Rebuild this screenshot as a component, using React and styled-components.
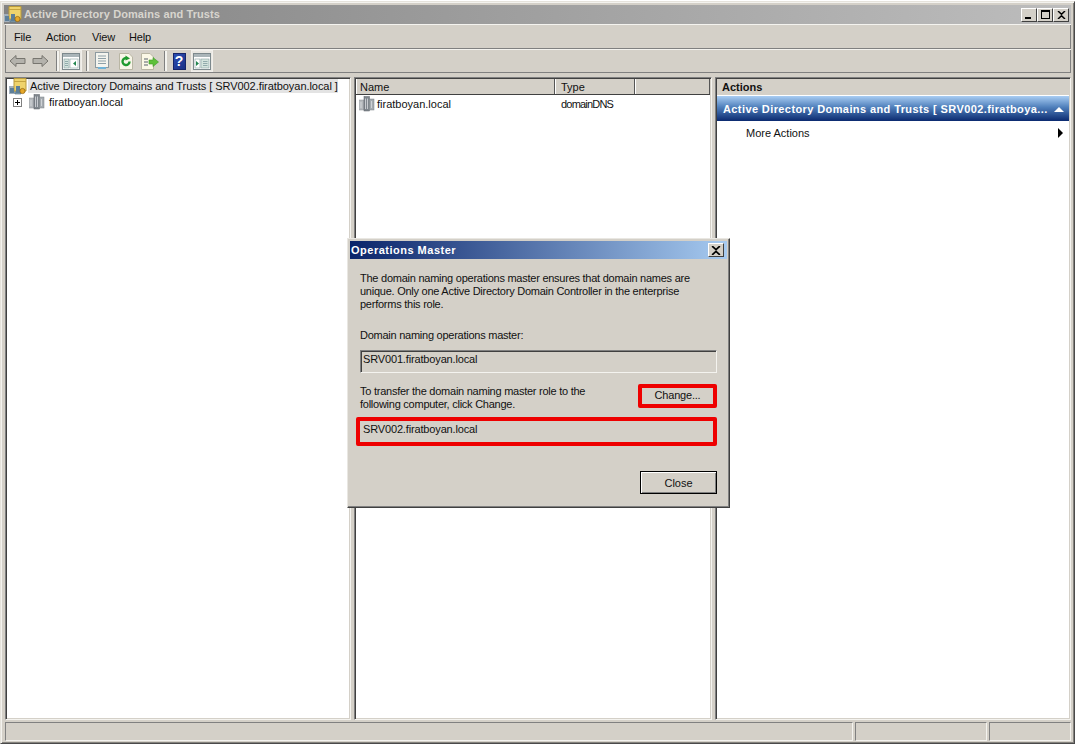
import React from "react";
import styled, { createGlobalStyle } from "styled-components";

const GlobalStyle = createGlobalStyle`
  html, body { margin: 0; padding: 0; background: #fff; }
  body {
    width: 1078px;
    height: 748px;
    overflow: hidden;
    font-family: "Liberation Sans", Arial, sans-serif;
    font-size: 11px;
    color: #111;
  }
`;

function BackIcon({ flip }) {
  return (
    <svg width="17" height="14" viewBox="0 0 17 14" style={{ transform: flip ? "scaleX(-1)" : "none" }}>
      <path d="M1 7 L7 1.5 V4.5 H16 V9.5 H7 V12.5 Z" fill="#b4b2ac" stroke="#77756f" />
    </svg>
  );
}

function PaneIcon({ right }) {
  return (
    <svg width="18" height="17" viewBox="0 0 18 17">
      <rect x="0.5" y="0.5" width="17" height="16" fill="#fff" stroke="#7d898d" />
      <rect x="1" y="1" width="16" height="3" fill="#aab5b9" />
      <rect x="2" y="6" width="5" height="9" fill={right ? "#fff" : "#d5e4de"} stroke="#87a0a0" strokeWidth="0.6" />
      <rect x="8" y="6" width="8" height="9" fill={right ? "#d5e4de" : "#fff"} stroke="#87a0a0" strokeWidth="0.6" />
      <path d={right ? "M3 8 L6 10.5 L3 13 Z" : "M14 8 L11 10.5 L14 13 Z"} fill="#23864f" />
      <path d={right ? "M10 8.5 H14.5 M10 10.5 H14.5 M10 12.5 H14.5" : "M3 8.5 H6 M3 10.5 H6 M3 12.5 H6"} stroke="#7f9aa0" strokeWidth="0.8" />
    </svg>
  );
}

function ListIcon() {
  return (
    <svg width="17" height="18" viewBox="0 0 17 18">
      <rect x="1.5" y="0.5" width="13" height="15" fill="#f4f4ee" stroke="#8d9aa0" />
      <path d="M4 4 H12 M4 6.5 H12 M4 9 H12 M4 11.5 H12" stroke="#8ea0a8" />
      <rect x="4" y="15" width="8" height="2" fill="#6fb3d8" />
    </svg>
  );
}

function RefreshIcon() {
  return (
    <svg width="16" height="17" viewBox="0 0 16 17">
      <path d="M1.5 0.5 H11 L14.5 4 V16.5 H1.5 Z" fill="#f8f6e8" stroke="#b9b6a4" />
      <path d="M11.5 8.5 A3.5 3.5 0 1 1 9.5 5.4" fill="none" stroke="#1f9a2e" strokeWidth="2.4" />
      <path d="M7.5 2.5 L12 5.5 L7.5 7.5 Z" fill="#1f9a2e" />
    </svg>
  );
}

function ExportIcon() {
  return (
    <svg width="19" height="17" viewBox="0 0 19 17">
      <path d="M1.5 0.5 H10 L13.5 4 V16.5 H1.5 Z" fill="#fbf8e6" stroke="#b9b6a4" />
      <path d="M4 6 H8 M4 9 H8 M4 12 H8" stroke="#56606a" />
      <path d="M9 7 H13 V4.5 L18.5 9 L13 13.5 V11 H9 Z" fill="#5ec13a" stroke="#3c9a2a" strokeWidth="0.6" />
    </svg>
  );
}

function ConsoleIcon() {
  return (
    <svg width="18" height="17" viewBox="0 0 18 17">
      <path d="M0 8 H7 V16 H0 Z" fill="#a3b0bd" />
      <path d="M6 6 H12 V16 H6 Z" fill="#88a2b3" stroke="#4a6c7d" strokeWidth="0.6" />
      <path d="M5 0.5 H17 V13 H5 Z" fill="#efd36c" stroke="#b99a3a" />
      <path d="M5 3.5 H17" stroke="#c5a440" />
      <rect x="1" y="10" width="4" height="5" fill="#5d7f99" />
      <rect x="7" y="8" width="4" height="7" fill="#5d7f99" />
      <circle cx="13.5" cy="13" r="2.6" fill="#e6a829" stroke="#8b5e10" strokeWidth="0.7" />
    </svg>
  );
}

function DomainIcon() {
  return (
    <svg width="16" height="16" viewBox="0 0 16 16">
      <rect x="0.5" y="4" width="4.5" height="10" fill="#b5b9bd" stroke="#8a8f94" strokeWidth="0.5" />
      <rect x="5" y="0.5" width="5.5" height="14.5" fill="#7f868d" stroke="#5c6167" strokeWidth="0.5" />
      <rect x="10.5" y="3" width="4.5" height="11" fill="#a5abb0" stroke="#7d8388" strokeWidth="0.5" />
      <path d="M6.5 2.5 V13 M8.5 2.5 V13 M2 6 V12 M12.5 5 V12" stroke="#d9dcdf" strokeWidth="0.8" />
    </svg>
  );
}

function CloseGlyph({ size = 9 }) {
  return (
    <svg width={size} height={size - 1} viewBox="0 0 9 8">
      <path d="M1 0 L4.5 3.2 L8 0 M1 8 L4.5 4.8 L8 8" fill="none" stroke="#000" strokeWidth="1.5" />
    </svg>
  );
}

export default function App() {
  return (
    <>
      <GlobalStyle />
      <Window>
        <TitleBar>
          <TitleIcon><ConsoleIcon /></TitleIcon>
          <TitleText>Active Directory Domains and Trusts</TitleText>
          <WinButtons>
            <WinButton><MinGlyph /></WinButton>
            <WinButton><MaxGlyph /></WinButton>
            <WinButton><CloseGlyph /></WinButton>
          </WinButtons>
        </TitleBar>

        <MenuBar>
          <MenuItem $w={32}>File</MenuItem>
          <MenuItem $w={46}>Action</MenuItem>
          <MenuItem $w={37}>View</MenuItem>
          <MenuItem>Help</MenuItem>
        </MenuBar>

        <ToolBar>
          <ToolSlot $w={23}><BackIcon /></ToolSlot>
          <ToolSlot $w={23}><BackIcon flip /></ToolSlot>
          <ToolSep />
          <ToolToggle><PaneIcon /></ToolToggle>
          <ToolSep />
          <ToolSlot $w={24}><ListIcon /></ToolSlot>
          <ToolSlot $w={24}><RefreshIcon /></ToolSlot>
          <ToolSlot $w={22}><ExportIcon /></ToolSlot>
          <ToolSep />
          <ToolSlot $w={22}><HelpBox>?</HelpBox></ToolSlot>
          <ToolToggle $ml={1}><PaneIcon right /></ToolToggle>
        </ToolBar>

        <Panes>
          <Pane>
            <RootRow>
              <ConsoleIcon />
              <RootLabel>Active Directory Domains and Trusts [ SRV002.firatboyan.local ]</RootLabel>
            </RootRow>
            <TreeRow>
              <Expander />
              <DomainIcon />
              <span>firatboyan.local</span>
            </TreeRow>
          </Pane>

          <Pane>
            <ColumnHeaders>
              <ColumnHeader $w={199} $pl={3}>Name</ColumnHeader>
              <ColumnHeader $w={80} $pl={5}>Type</ColumnHeader>
              <ColumnHeader $fill />
            </ColumnHeaders>
            <ListRow>
              <NameCell><DomainIcon />firatboyan.local</NameCell>
              <TypeCell>domainDNS</TypeCell>
            </ListRow>
          </Pane>

          <Pane>
            <ActionsHeader>Actions</ActionsHeader>
            <ActionsBand>
              <span>Active Directory Domains and Trusts [ SRV002.firatboya...</span>
              <Caret />
            </ActionsBand>
            <ActionRow>
              <span>More Actions</span>
              <RightArrow />
            </ActionRow>
          </Pane>
        </Panes>

        <StatusBar>
          <StatusCell $w={848} />
          <StatusCell $w={132} />
          <StatusCell $fill />
        </StatusBar>
      </Window>

      <Dialog>
        <DialogTitle>
          <span>Operations Master</span>
          <DialogClose><CloseGlyph size={10} /></DialogClose>
        </DialogTitle>
        <DialogBody>
          <Paragraph>
            The domain naming operations master ensures that domain names are
            <br />
            unique. Only one Active Directory Domain Controller in the enterprise
            <br />
            performs this role.
          </Paragraph>
          <FieldLabel>Domain naming operations master:</FieldLabel>
          <ReadOnlyField>SRV001.firatboyan.local</ReadOnlyField>
          <TransferRow>
            <Paragraph>
              To transfer the domain naming master role to the
              <br />
              following computer, click Change.
            </Paragraph>
            <RedMark $button>
              <PlainButton>Change...</PlainButton>
            </RedMark>
          </TransferRow>
          <RedMark>
            <TargetField>SRV002.firatboyan.local</TargetField>
          </RedMark>
          <DialogFooter>
            <CloseButton>Close</CloseButton>
          </DialogFooter>
        </DialogBody>
      </Dialog>
    </>
  );
}

const Window = styled.div`
  box-sizing: border-box;
  width: 1075px;
  height: 743px;
  margin-top: 1px;
  padding: 3px 3px 2px 4px;
  display: flex;
  flex-direction: column;
  background: #d4d0c8;
  border-top: 1px solid #e6e3dc;
  border-left: 1px solid #e6e3dc;
  border-right: 1px solid #4a4a4a;
  border-bottom: 1px solid #4a4a4a;
  box-shadow: inset 1px 1px 0 #f4f3ef, inset -1px -1px 0 #85837e;
`;

const TitleBar = styled.div`
  height: 19px;
  flex: none;
  display: flex;
  align-items: center;
  margin-left: -1px;
  background: linear-gradient(90deg, #838383, #bdbdbd);
`;

const TitleIcon = styled.div`
  display: flex;
  margin-right: 2px;
`;

const TitleText = styled.div`
  flex: 1;
  margin-top: -1px;
  font-weight: bold;
  font-size: 11px;
  letter-spacing: 0.1px;
  color: #d8d5ce;
`;

const WinButtons = styled.div`
  display: flex;
  margin-right: 2px;
`;

const WinButton = styled.div`
  box-sizing: border-box;
  width: 16px;
  height: 14px;
  display: flex;
  align-items: center;
  justify-content: center;
  background: #d4d0c8;
  border: 1px solid;
  border-color: #fff #404040 #404040 #fff;
`;

const MinGlyph = styled.div`
  width: 6px;
  height: 2px;
  background: #000;
  margin-top: 6px;
  margin-right: 2px;
`;

const MaxGlyph = styled.div`
  box-sizing: border-box;
  width: 9px;
  height: 9px;
  border: 1px solid #000;
  border-top-width: 2px;
`;

const MenuBar = styled.div`
  box-sizing: border-box;
  height: 25px;
  flex: none;
  padding: 1px 0 0 9px;
  display: flex;
  align-items: center;
  letter-spacing: -0.15px;
  border-top: 1px solid #f4f3ef;
  border-bottom: 1px solid #808080;
  box-shadow: inset 1px 0 0 #808080, inset -1px 0 0 #808080;
`;

const MenuItem = styled.div`
  width: ${(p) => (p.$w ? `${p.$w}px` : "auto")};
`;

const ToolBar = styled.div`
  box-sizing: border-box;
  height: 24px;
  flex: none;
  padding-left: 1px;
  display: flex;
  align-items: center;
  border-top: 1px solid #f4f3ef;
  border-bottom: 1px solid #808080;
  box-shadow: inset 1px 0 0 #808080, inset -1px 0 0 #808080;
`;

const ToolSlot = styled.div`
  width: ${(p) => p.$w}px;
  display: flex;
  align-items: center;
  justify-content: center;
`;

const ToolSep = styled.div`
  width: 2px;
  height: 20px;
  margin: 0 1px 0 4px;
  border-left: 1px solid #808080;
  background: #f4f3ef;
`;

const ToolToggle = styled.div`
  box-sizing: border-box;
  width: 22px;
  height: 22px;
  margin-left: ${(p) => p.$ml || 0}px;
  display: flex;
  align-items: center;
  justify-content: center;
  background: #e9e7e2;
  border: 1px solid #f1efeb;
`;

const HelpBox = styled.div`
  box-sizing: border-box;
  width: 13px;
  height: 17px;
  display: flex;
  align-items: center;
  justify-content: center;
  font-size: 14px;
  font-weight: bold;
  color: #fff;
  background: linear-gradient(135deg, #2c4fb4, #1b2f85);
  border: 1px solid #16256a;
`;

const Panes = styled.div`
  flex: 1;
  min-height: 0;
  margin-top: 4px;
  display: grid;
  grid-template-columns: 346px 358px 356px;
  gap: 3px;
`;

const Pane = styled.div`
  box-sizing: border-box;
  min-width: 0;
  background: #fff;
  border: 1px solid;
  border-color: #808080 #f4f3ef #f4f3ef #808080;
  box-shadow: inset 1px 1px 0 #404040, inset -1px -1px 0 #d4d0c8;
  padding: 1px;
  overflow: hidden;
`;

const RootRow = styled.div`
  height: 16px;
  margin-top: -1px;
  padding-left: 2px;
  display: flex;
  align-items: center;
  gap: 1px;
`;

const RootLabel = styled.span`
  padding: 1px 2px;
  width: 310px;
  box-sizing: border-box;
  white-space: nowrap;
  background: #e3e3e3;
  letter-spacing: -0.05px;
`;

const TreeRow = styled.div`
  height: 16px;
  padding-left: 6px;
  display: flex;
  align-items: center;
  gap: 4px;
`;

const Expander = styled.div`
  box-sizing: border-box;
  width: 9px;
  height: 9px;
  margin-right: 3px;
  border: 1px solid #808080;
  background:
    linear-gradient(#000, #000) center / 5px 1px no-repeat,
    linear-gradient(#000, #000) center / 1px 5px no-repeat,
    #fff;
`;

const ColumnHeaders = styled.div`
  box-sizing: border-box;
  height: 16px;
  display: flex;
  background: #d4d0c8;
  border-bottom: 1px solid #404040;
`;

const ColumnHeader = styled.div`
  box-sizing: border-box;
  width: ${(p) => (p.$w ? `${p.$w}px` : "auto")};
  flex: ${(p) => (p.$fill ? 1 : "none")};
  padding: 1px 0 0 ${(p) => p.$pl || 0}px;
  border-left: 1px solid #fff;
  border-right: 1px solid #555;
  line-height: 14px;
`;

const ListRow = styled.div`
  height: 18px;
  padding-left: 3px;
  display: flex;
  align-items: center;
`;

const NameCell = styled.div`
  width: 202px;
  display: flex;
  align-items: center;
  gap: 2px;
`;

const TypeCell = styled.span`
  letter-spacing: -0.8px;
`;

const ActionsHeader = styled.div`
  box-sizing: border-box;
  height: 16px;
  padding: 1px 0 0 5px;
  font-weight: bold;
  background: #d4d0c8;
  line-height: 14px;
`;

const ActionsBand = styled.div`
  box-sizing: border-box;
  height: 26px;
  padding: 1px 5px 0 6px;
  display: flex;
  align-items: center;
  justify-content: space-between;
  white-space: nowrap;
  font-weight: bold;
  letter-spacing: 0.4px;
  color: #fff;
  background: linear-gradient(#a9cdf3, #4f7fbb 45%, #0b2a70);
  border-top: 1px solid #fff;
`;

const Caret = styled.div`
  width: 0;
  height: 0;
  border-left: 5px solid transparent;
  border-right: 5px solid transparent;
  border-bottom: 5px solid #fff;
`;

const ActionRow = styled.div`
  height: 24px;
  padding: 0 6px 0 29px;
  display: flex;
  align-items: center;
  justify-content: space-between;
`;

const RightArrow = styled.div`
  width: 0;
  height: 0;
  border-top: 5px solid transparent;
  border-bottom: 5px solid transparent;
  border-left: 5px solid #000;
`;

const StatusBar = styled.div`
  height: 19px;
  flex: none;
  margin-top: 2px;
  display: flex;
  gap: 2px;
`;

const StatusCell = styled.div`
  box-sizing: border-box;
  width: ${(p) => (p.$w ? `${p.$w}px` : "auto")};
  flex: ${(p) => (p.$fill ? 1 : "none")};
  border: 1px solid;
  border-color: #808080 #f4f3ef #f4f3ef #808080;
`;

const Dialog = styled.div`
  box-sizing: border-box;
  position: absolute;
  left: 347px;
  top: 238px;
  width: 383px;
  height: 270px;
  padding: 2px;
  display: flex;
  flex-direction: column;
  background: #d4d0c8;
  border: 1px solid;
  border-color: #e9e7e2 #404040 #404040 #e9e7e2;
  box-shadow: inset -1px -1px 0 #808080;
`;

const DialogTitle = styled.div`
  height: 18px;
  flex: none;
  padding: 0 3px 0 1px;
  display: flex;
  align-items: center;
  justify-content: space-between;
  font-weight: bold;
  letter-spacing: 0.5px;
  color: #fff;
  background: linear-gradient(90deg, #0a246a, #a6caf0);
`;

const DialogClose = styled.div`
  box-sizing: border-box;
  width: 16px;
  height: 14px;
  display: flex;
  align-items: center;
  justify-content: center;
  background: #d4d0c8;
  border: 1px solid;
  border-color: #fff #404040 #404040 #fff;
`;

const DialogBody = styled.div`
  flex: 1;
  padding: 13px 10px 0 10px;
  display: flex;
  flex-direction: column;
`;

const Paragraph = styled.div`
  line-height: 13px;
  letter-spacing: -0.25px;
  white-space: nowrap;
`;

const FieldLabel = styled.div`
  margin-top: 18px;
  line-height: 13px;
  letter-spacing: -0.25px;
`;

const ReadOnlyField = styled.div`
  box-sizing: border-box;
  height: 23px;
  margin-top: 8px;
  width: 357px;
  padding: 1px 0 0 2px;
  line-height: 15px;
  letter-spacing: -0.15px;
  border: 1px solid;
  border-color: #808080 #f4f3ef #f4f3ef #808080;
  box-shadow: inset 1px 1px 0 #404040;
`;

const TransferRow = styled.div`
  margin-top: 12px;
  height: 32px;
  display: flex;
  justify-content: space-between;
  align-items: flex-start;
`;

const RedMark = styled.div`
  box-sizing: border-box;
  border: 4px solid #ee0000;
  border-radius: 2px;
  width: ${(p) => (p.$button ? "79px" : "361px")};
  height: ${(p) => (p.$button ? "24px" : "29px")};
  margin: ${(p) => (p.$button ? "-1px 0 0 0" : "0 0 0 -4px")};
`;

const PlainButton = styled.div`
  box-sizing: border-box;
  height: 100%;
  padding-bottom: 2px;
  display: flex;
  align-items: center;
  justify-content: center;
  letter-spacing: -0.2px;
`;

const TargetField = styled.div`
  padding: 1px 0 0 3px;
  line-height: 15px;
  letter-spacing: -0.15px;
`;

const DialogFooter = styled.div`
  margin-top: 25px;
  display: flex;
  justify-content: flex-end;
`;

const CloseButton = styled.div`
  box-sizing: border-box;
  width: 77px;
  height: 23px;
  display: flex;
  align-items: center;
  justify-content: center;
  border: 1px solid #000;
  box-shadow: inset 1px 1px 0 #fff, inset -1px -1px 0 #808080;
`;
